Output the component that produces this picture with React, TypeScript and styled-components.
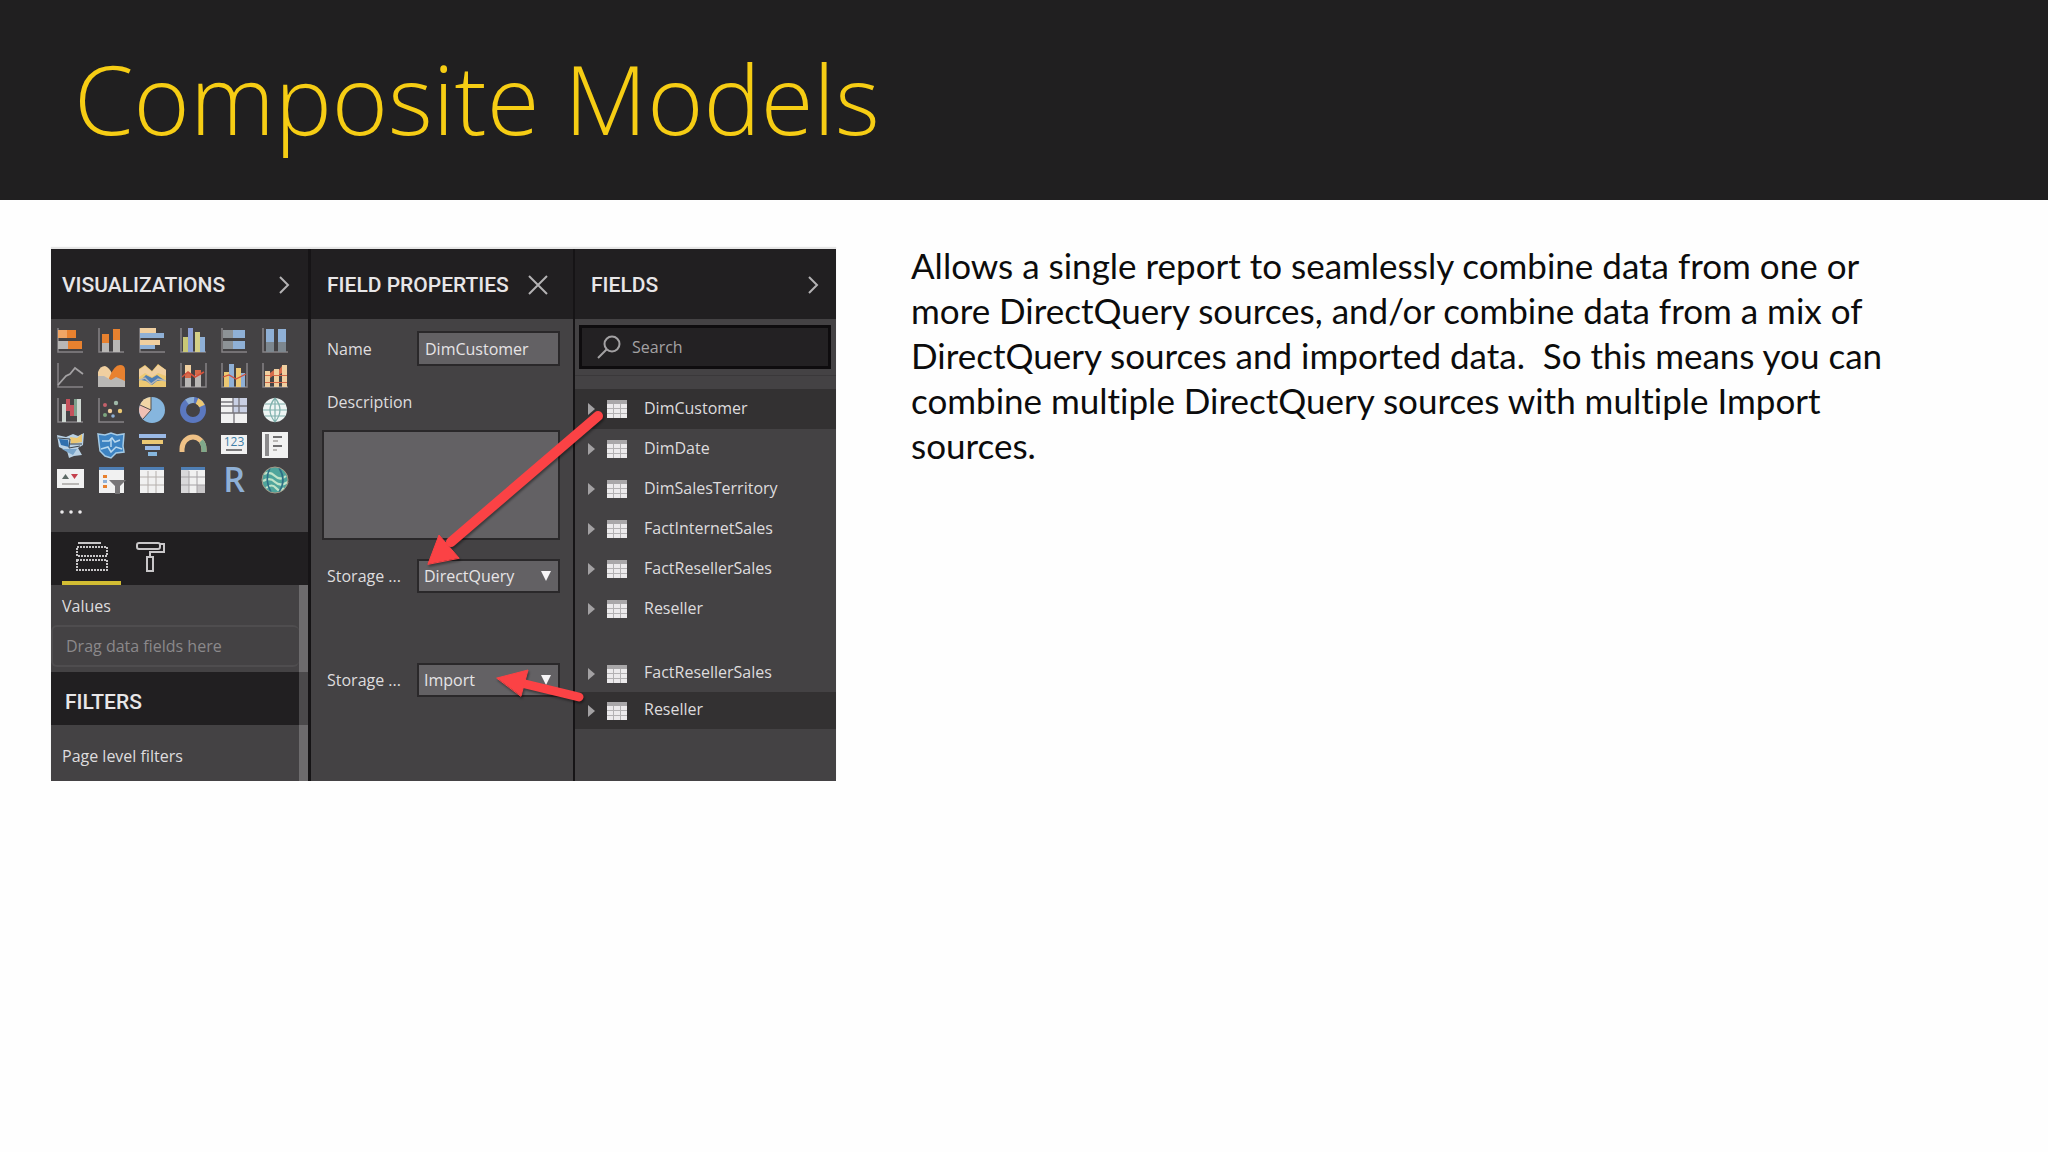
import React from "react";
import styled, { createGlobalStyle } from "styled-components";

const color = {
  title: "#f6cd14",
  banner: "#201f20",
  pane: "#444244",
  paneDark: "#211f21",
  line: "#161416",
  control: "#636164",
  controlEdge: "#2a282a",
  selected: "#333132",
  text: "#dedcde",
  muted: "#8b898b",
  arrow: "#fb4245",
};

const GlobalStyle = createGlobalStyle`
  *, *::before, *::after { box-sizing: border-box; }
  body {
    margin: 0;
    background: #fefefe;
    font-family: "Open Sans", "Noto Sans", sans-serif;
  }
  h1, h2, p, ul { margin: 0; padding: 0; }
  button { padding: 0; border: 0; background: none; color: inherit; cursor: pointer; }
`;

const Banner = styled.header`
  padding: 34px 74px 38px;
  background: ${color.banner};
`;

const Title = styled.h1`
  color: ${color.title};
  font-size: 96px;
  font-weight: 300;
  line-height: 128px;
`;

const Content = styled.main`
  display: flex;
  align-items: flex-start;
  gap: 75px;
  padding: 43px 51px;
`;

const Summary = styled.p`
  flex: 1;
  max-width: 1000px;
  color: #0c0c0c;
  font-family: Lato, "Open Sans", sans-serif;
  font-size: 35px;
  font-variant-ligatures: none;
  line-height: 45px;
  white-space: pre-wrap;
`;

const Panes = styled.section`
  position: relative;
  flex: none;
  display: grid;
  grid-template-columns: 257px 265px 263px;
  margin-top: 6px;
  background: ${color.pane};
  box-shadow: 0 -2px 1px #e6e6e6;
  color: ${color.text};
  font-size: 16px;
  font-weight: 500;
  line-height: 22px;
`;

const Pane = styled.div<{ $edge?: number }>`
  display: flex;
  flex-direction: column;
  border-left: ${(p) => p.$edge ?? 0}px solid ${color.line};
`;

const PaneHeader = styled.div<{ $left: number; $right: number }>`
  display: flex;
  align-items: center;
  justify-content: space-between;
  height: 70px;
  padding: 1px ${(p) => p.$right}px 0 ${(p) => p.$left}px;
  background: ${color.paneDark};
`;

const PaneTitle = styled.h2`
  color: #e8e6e8;
  font-family: Roboto, sans-serif;
  font-size: 21px;
  font-weight: 500;
  line-height: 24px;
  white-space: nowrap;
`;

const IconButton = styled.button`
  display: flex;
  color: #b4b2b4;
`;

const Gallery = styled.div`
  display: grid;
  grid-template-columns: repeat(6, 41px);
  grid-auto-rows: 35px;
  height: 213px;
  padding-top: 3px;
`;

const GalleryButton = styled.button`
  display: grid;
  justify-items: start;
  align-items: center;
  padding-left: 5px;

  > svg { overflow: visible; }
`;

const Tabs = styled.div`
  display: flex;
  height: 53px;
  padding-left: 11px;
  background: ${color.paneDark};
`;

const Tab = styled.button<{ $active?: boolean }>`
  display: grid;
  place-items: center;
  width: 59px;
  border-bottom: 4px solid ${(p) => (p.$active ? "#d3bd33" : "transparent")};
`;

const Scroller = styled.div`
  display: flex;
  flex: 1;
`;

const ScrollBody = styled.div`
  flex: 1;
`;

const Track = styled.div`
  width: 9px;
  padding-top: 87px;
  background: #6d6b6d;
`;

const Thumb = styled.div`
  height: 53px;
  background: #4b494b;
`;

const Well = styled.div`
  display: flex;
  flex-direction: column;
  gap: 8px;
  height: 87px;
  padding-top: 10px;
`;

const WellLabel = styled.div`
  padding-left: 11px;
`;

const DropZone = styled.div`
  display: flex;
  align-items: center;
  height: 42px;
  padding-left: 13px;
  border: 2px solid #4f4d4f;
  border-right: 0;
  border-radius: 6px;
  color: ${color.muted};
`;

const SectionBar = styled.div`
  display: flex;
  align-items: center;
  height: 53px;
  padding: 7px 0 0 14px;
  background: ${color.paneDark};
`;

const FilterLabel = styled.div`
  padding: 20px 11px 14px;
`;

const Form = styled.form`
  display: flex;
  flex-direction: column;
  padding: 12px 13px 0 11px;
`;

const Field = styled.div<{ $gap?: number }>`
  display: flex;
  align-items: center;
  justify-content: space-between;
  margin-top: ${(p) => p.$gap ?? 0}px;
  padding-left: 5px;
`;

const Label = styled.label`
  white-space: nowrap;
`;

const DescriptionLabel = styled(Label)`
  margin: 25px 5px 17px;
`;

const control = `
  border: 2px solid ${color.controlEdge};
  border-radius: 0;
  outline: 0;
  background: ${color.control};
  color: #e6e4e6;
  font: inherit;
`;

const TextBox = styled.input`
  ${control}
  width: 143px;
  height: 35px;
  padding: 0 6px;
`;

const TextArea = styled.textarea`
  ${control}
  height: 110px;
  padding: 8px;
  resize: none;
`;

const SelectBox = styled.div`
  display: grid;
  align-items: center;
  width: 143px;

  > * { grid-area: 1 / 1; }
  > svg { justify-self: end; margin-right: 9px; pointer-events: none; }
`;

const Select = styled.select`
  ${control}
  width: 100%;
  height: 34px;
  padding: 0 5px;
  appearance: none;
`;

const SearchRow = styled.div`
  height: 57px;
  padding: 6px 5px 0 4px;
  border-bottom: 1px solid #3a383a;
`;

const SearchBox = styled.label`
  display: flex;
  align-items: center;
  gap: 11px;
  height: 44px;
  padding-left: 15px;
  border: 3px solid #0e0c0e;
  background: #232123;
  color: #a3a1a3;
`;

const SearchInput = styled.input`
  min-width: 0;
  flex: 1;
  padding: 0;
  border: 0;
  outline: 0;
  background: none;
  color: inherit;
  font: inherit;
  &::placeholder { color: inherit; opacity: 1; }
`;

const TableList = styled.ul<{ $gap: number }>`
  margin-top: ${(p) => p.$gap}px;
  list-style: none;
`;

const TableButton = styled.button<{ $selected: boolean; $height: number }>`
  display: flex;
  align-items: center;
  width: 100%;
  height: ${(p) => p.$height}px;
  padding-left: 13px;
  background: ${(p) => (p.$selected ? color.selected : "none")};
  font: inherit;
`;

const TableName = styled.span`
  padding: 0 0 3px 17px;
`;

const TableGlyph = styled.svg`
  margin-left: 12px;
`;

const Callouts = styled.svg`
  position: absolute;
  inset: 0;
  width: 100%;
  height: 100%;
  pointer-events: none;
  filter: drop-shadow(1px 2px 1px rgba(0, 0, 0, 0.4));
`;

const ORANGE = "#e8812f";
const CREAM = "#f0cfa0";
const YELLOW = "#ecc873";
const GRAY = "#b9b7b5";
const BLUE = "#8fb0d6";
const STEEL = "#4f7fb5";
const RED = "#d66a4a";
const WHITE = "#f1f1f1";
const AXIS = "#858385";

const Bar = ({ x, y, w, h, c }: { x: number; y: number; w: number; h: number; c: string }) => (
  <rect x={x} y={y} width={w} height={h} fill={c} />
);
const Axes = ({ both = false }: { both?: boolean }) => (
  <path d={both ? "M2 2V26H27V2" : "M2 2V26H27"} fill="none" stroke={AXIS} strokeWidth="1.5" />
);

const visuals: { name: string; art: React.ReactNode }[] = [
  { name: "Stacked bar chart", art: <><Axes /><Bar x={2} y={4} w={9} h={8} c="#f0a565" /><Bar x={11} y={4} w={9} h={8} c={ORANGE} /><Bar x={2} y={15} w={10} h={8} c={GRAY} /><Bar x={12} y={15} w={14} h={8} c={ORANGE} /></> },
  { name: "Stacked column chart", art: <><Axes /><Bar x={5} y={8} w={7} h={9} c={ORANGE} /><Bar x={5} y={17} w={7} h={9} c={GRAY} /><Bar x={16} y={3} w={7} h={11} c={ORANGE} /><Bar x={16} y={14} w={7} h={12} c={GRAY} /></> },
  { name: "Clustered bar chart", art: <><Axes /><Bar x={2} y={2} w={16} h={5} c={CREAM} /><Bar x={2} y={7} w={24} h={5} c={BLUE} /><Bar x={2} y={14} w={20} h={5} c={CREAM} /><Bar x={2} y={19} w={15} h={4} c={BLUE} /></> },
  { name: "Clustered column chart", art: <><Axes /><Bar x={4} y={11} w={5} h={15} c="#c9c876" /><Bar x={9} y={2} w={5} h={24} c="#8c9fd4" /><Bar x={16} y={6} w={5} h={20} c="#d5cf86" /><Bar x={21} y={11} w={5} h={15} c={BLUE} /></> },
  { name: "100% stacked bar chart", art: <><Axes /><Bar x={3} y={4} w={10} h={8} c="#8d9296" /><Bar x={13} y={4} w={12} h={8} c={BLUE} /><Bar x={3} y={15} w={10} h={8} c="#8d9296" /><Bar x={13} y={15} w={12} h={8} c={BLUE} /></> },
  { name: "100% stacked column chart", art: <><Axes /><Bar x={5} y={3} w={8} h={13} c={BLUE} /><Bar x={5} y={16} w={8} h={10} c="#7d878f" /><Bar x={17} y={3} w={8} h={13} c={BLUE} /><Bar x={17} y={16} w={8} h={10} c="#7d878f" /></> },
  { name: "Line chart", art: <><Axes /><path d="M2 24 10 15 14 13 19 7 27 13" fill="none" stroke="#a3a1a3" strokeWidth="1.8" /></> },
  { name: "Area chart", art: <><path d="M1 26V11Q3 5 8 5Q12 6 16 14V26Z" fill={CREAM} /><path d="M12 17Q17 4 23 4Q28 4 28 9V26H12Z" fill={ORANGE} /><path d="M1 26V15L7 15 14 19 19 16 28 20V26Z" fill={GRAY} /></> },
  { name: "Stacked area chart", art: <><path d="M1 26V8L7 4 14 10 20 3 28 9V26Z" fill={YELLOW} /><path d="M1 9 7 5 14 11 20 4 28 9V15L20 12 14 16 7 12 1 16Z" fill={CREAM} /><path d="M3 19 8 14 14 17 19 14 26 19 19 20 14 24 8 20Z" fill={STEEL} /><path d="M1 19 7 17 13 23 20 18 28 20" fill="none" stroke={GRAY} strokeWidth="1.5" /></> },
  { name: "Line and stacked column chart", art: <><Axes both /><Bar x={6} y={4} w={6} h={8} c={CREAM} /><Bar x={6} y={12} w={6} h={5} c={RED} /><Bar x={6} y={17} w={6} h={9} c={GRAY} /><Bar x={16} y={9} w={6} h={5} c={RED} /><Bar x={16} y={14} w={6} h={12} c={GRAY} /><path d="M3 16 9 11 16 16 25 11" fill="none" stroke="#d4503b" strokeWidth="1.6" /></> },
  { name: "Line and clustered column chart", art: <><Axes both /><Bar x={4} y={11} w={5} h={15} c={YELLOW} /><Bar x={9} y={3} w={5} h={23} c={BLUE} /><Bar x={16} y={7} w={5} h={19} c={YELLOW} /><Bar x={21} y={12} w={4} h={14} c={BLUE} /><path d="M3 16 9 14 16 18 26 13" fill="none" stroke="#d4503b" strokeWidth="1.2" /></> },
  { name: "Ribbon chart", art: <><Axes /><path d="M4 12H9L13 9H18L21 5H26V12H21L18 14H13L9 17H4Z" fill={RED} /><Bar x={4} y={10} w={5} h={16} c={CREAM} /><Bar x={13} y={8} w={5} h={18} c={CREAM} /><Bar x={21} y={4} w={5} h={22} c={CREAM} /><Bar x={4} y={21} w={22} h={1} c={RED} /><Bar x={4} y={14} w={22} h={1} c={RED} /></> },
  { name: "Waterfall chart", art: <><Axes /><Bar x={6} y={8} w={4} h={18} c="#cfd8d2" /><Bar x={10} y={3} w={4} h={12} c="#c4525c" /><Bar x={14} y={9} w={4} h={11} c="#c4525c" /><Bar x={18} y={3} w={3} h={17} c="#7fa08d" /><Bar x={21} y={3} w={4} h={23} c="#cfd8d2" /></> },
  { name: "Scatter chart", art: <><Axes /><circle cx="8" cy="9" r="2" fill="#c4606a" /><circle cx="13" cy="15" r="2.2" fill={CREAM} /><circle cx="19" cy="7" r="2.2" fill="#9fb8a8" /><circle cx="8" cy="19" r="2" fill="#7da67f" /><circle cx="16" cy="20" r="1.8" fill={BLUE} /><circle cx="23" cy="15" r="2.2" fill={YELLOW} /></> },
  { name: "Pie chart", art: <><circle cx="14" cy="14" r="13" fill="#86b6de" /><path d="M13 14V1A13 13 0 0 0 2 9Z" fill="#f0d6a6" /><path d="M13 14 2 9A13 13 0 0 0 5 23Z" fill="#efc0b4" /><path d="M13 1V14L5 23M13 14 2 9" stroke="#55504f" fill="none" /></> },
  { name: "Donut chart", art: <><circle cx="14" cy="14" r="10" fill="none" stroke="#5b78c0" strokeWidth="6" /><path d="M18 5A10 10 0 0 1 23 10" fill="none" stroke={YELLOW} strokeWidth="6" /><path d="M8 6A10 10 0 0 1 15 4" fill="none" stroke={BLUE} strokeWidth="6" /></> },
  { name: "Treemap", art: <><Bar x={1} y={2} w={26} h={25} c={WHITE} /><Bar x={13} y={2} w={14} h={15} c="#c9d0e4" /><path d="M1 10H19M1 17H27M13 2V17M19 2V17M14 17V27M19 10H27M1 6H13" stroke="#77757b" strokeWidth="1.3" /></> },
  { name: "Map", art: <><circle cx="14" cy="14" r="12" fill="#eef5f4" /><path d="M2 14H26M4 8H24M4 20H24M14 2V26M14 2Q4 14 14 26M14 2Q24 14 14 26" stroke="#7fb0ac" fill="none" strokeWidth="1.2" /></> },
  { name: "Filled map", art: <><path d="M1 4 10 6 17 3 22 5 28 2 27 14 22 17 26 24 18 25 13 27 11 20 3 16Z" fill="#b9d1e4" /><path d="M3 8 12 9 13 16 5 14Z" fill="#2f6fae" /><path d="M14 6 21 7 26 3V11L15 13Z" fill={YELLOW} /><path d="M6 18H21L17 24 11 21Z" fill="#79a5cb" /><path d="M2 7 14 8 13 17 24 15M14 13H26" fill="none" stroke="#3f474f" /></> },
  { name: "Shape map", art: <><path d="M1 3 8 4 14 2 20 4 27 3 26 15 27 21 19 22 14 27 8 25 3 20 2 12Z" fill="#3d83c2" stroke="#a5cbe6" strokeWidth="1.5" /><path d="M5 10H12L15 7 18 11 23 9M4 18 11 16 14 21 19 16 25 18M14 7V16" fill="none" stroke="#b8d8ee" strokeWidth="1.5" /></> },
  { name: "Funnel chart", art: <><Bar x={1} y={3} w={27} h={4} c="#9ab9e6" /><Bar x={4} y={9} w={21} h={4} c={YELLOW} /><Bar x={7} y={15} w={15} h={4} c="#9ab9e6" /><Bar x={10} y={21} w={9} h={4} c="#86b6de" /></> },
  { name: "Gauge", art: <><path d="M3 21V18A11 12 0 0 1 25 18V21" fill="none" stroke="#efc186" strokeWidth="5" /><path d="M22 10Q25 13 25 18V21" fill="none" stroke="#7fa88b" strokeWidth="5" /></> },
  { name: "Card", art: <><Bar x={1} y={4} w={26} h={19} c={WHITE} /><text x="14" y="15" textAnchor="middle" fontFamily="Open Sans" fontSize="12" fill="#3f7fa8">123</text><Bar x={6} y={18} w={16} h={2} c="#7b7a7c" /></> },
  { name: "Multi-row card", art: <><Bar x={1} y={1} w={26} h={26} c={WHITE} /><Bar x={4} y={3} w={4} h={22} c="#8b8a8c" /><Bar x={12} y={5} w={9} h={2} c="#6f6e70" /><Bar x={12} y={9} w={5} h={2} c={GRAY} /><Bar x={12} y={14} w={9} h={2} c="#6f6e70" /><Bar x={12} y={18} w={4} h={2} c={GRAY} /></> },
  { name: "KPI", art: <><Bar x={1} y={3} w={27} h={19} c={WHITE} /><path d="M6 13 9.500 8 13 13Z" fill="#5d6a66" /><path d="M15 8H22L18.500 13Z" fill="#c4404c" /><Bar x={6} y={17} w={17} h={2} c={GRAY} /></> },
  { name: "Slicer", art: <><Bar x={2} y={1} w={25} h={26} c={WHITE} /><Bar x={2} y={1} w={25} h={3} c={STEEL} /><Bar x={6} y={9} w={4} h={3} c={ORANGE} /><Bar x={6} y={14} w={4} h={3} c={BLUE} /><Bar x={6} y={19} w={4} h={3} c={ORANGE} /><path d="M12 14H29L23 20V28H18V20Z" fill="#777577" /></> },
  { name: "Table", art: <><Bar x={2} y={1} w={24} h={26} c={WHITE} /><Bar x={2} y={1} w={24} h={3} c={STEEL} /><path d="M2 11H26M2 19H26M10 5V27M18 5V27" stroke="#b5b0ad" /></> },
  { name: "Matrix", art: <><Bar x={2} y={1} w={24} h={26} c={WHITE} /><Bar x={2} y={1} w={24} h={3} c={STEEL} /><Bar x={2} y={4} w={8} h={23} c="#d9d8da" /><Bar x={18} y={19} w={8} h={8} c="#c9c7c9" /><path d="M2 11H26M2 19H26M10 5V27M18 5V27" stroke="#a5a2a5" /></> },
  { name: "R script visual", art: <text x="14" y="26" textAnchor="middle" fontFamily="Open Sans" fontWeight="600" fontSize="34" fill="#8fb0d6">R</text> },
  { name: "ArcGIS map", art: <><circle cx="14" cy="14" r="13" fill="#4fa59c" /><path d="M3 8Q9 5 14 10T25 10M2 15Q9 11 14 16T27 16M5 22Q11 17 15 22T23 22" stroke="#bfe3c9" fill="none" strokeWidth="2.2" /><path d="M9 2Q3 14 10 26M18 2Q26 14 18 26" stroke="#2f6f86" fill="none" strokeWidth="1.6" /><circle cx="14" cy="14" r="13" fill="none" stroke="#a59a88" /></> },
];

const Chevron = () => (
  <svg width="12" height="18" viewBox="0 0 12 18" fill="none" stroke="currentColor" strokeWidth="2">
    <path d="M2 1 10 9 2 17" />
  </svg>
);

const Close = () => (
  <svg width="20" height="20" viewBox="0 0 20 20" fill="none" stroke="currentColor" strokeWidth="2">
    <path d="M1 1 19 19M19 1 1 19" />
  </svg>
);

const Magnifier = () => (
  <svg width="24" height="24" viewBox="0 0 24 24" fill="none" stroke="currentColor" strokeWidth="2">
    <circle cx="15" cy="9" r="7.500" />
    <path d="M10 14 1 23" />
  </svg>
);

const Expander = () => (
  <svg width="7" height="12" viewBox="0 0 7 12" fill="#a3a1a3">
    <path d="M0 0 7 6 0 12Z" />
  </svg>
);

const TableIcon = () => (
  <TableGlyph width="20" height="18" viewBox="0 0 20 18">
    <rect width="20" height="18" fill="#eceaec" />
    <rect width="20" height="4" fill="#a9a7a9" />
    <path d="M0 8.500H20M0 13.500H20M6.500 4V18M13.500 4V18" stroke="#b3b1b3" />
  </TableGlyph>
);

const DownArrow = () => (
  <svg width="10" height="10" viewBox="0 0 10 10" fill="#f7f5f7">
    <path d="M0 0H10L5 10Z" />
  </svg>
);

const FieldsIcon = () => (
  <svg width="32" height="31" viewBox="0 0 32 31" fill="none" stroke="#c9c7c9" strokeWidth="2">
    <path d="M2 2H25" />
    <path d="M1 6H31V15H1ZM1 19H31V29H1Z" strokeDasharray="2 1" />
  </svg>
);

const RollerIcon = () => (
  <svg width="30" height="31" viewBox="0 0 30 31" fill="none" stroke="#c9c7c9" strokeWidth="2">
    <rect x="1" y="2" width="23" height="6" rx="2" />
    <path d="M24 3H28V11H14V16M11 16H17V30H11Z" />
  </svg>
);

const MoreIcon = () => (
  <svg width="28" height="28" viewBox="0 0 28 28" fill="#eceaec">
    <circle cx="6" cy="11" r="1.800" />
    <circle cx="15" cy="11" r="1.800" />
    <circle cx="24" cy="11" r="1.800" />
  </svg>
);

const modelTables = ["DimCustomer", "DimDate", "DimSalesTerritory", "FactInternetSales", "FactResellerSales", "Reseller"];
const importTables = ["FactResellerSales", "Reseller"];

function Tables({ names, selected, gap, rowHeight }: { names: string[]; selected: string; gap: number; rowHeight: number }) {
  return (
    <TableList $gap={gap}>
      {names.map((name) => (
        <li key={name}>
          <TableButton type="button" $selected={name === selected} $height={rowHeight}>
            <Expander />
            <TableIcon />
            <TableName>{name}</TableName>
          </TableButton>
        </li>
      ))}
    </TableList>
  );
}

function StorageField({ id, value, gap }: { id: string; value: string; gap: number }) {
  return (
    <Field $gap={gap}>
      <Label htmlFor={id}>Storage ...</Label>
      <SelectBox>
        <Select id={id} defaultValue={value}>
          <option>DirectQuery</option>
          <option>Import</option>
        </Select>
        <DownArrow />
      </SelectBox>
    </Field>
  );
}

export default function App() {
  return (
    <>
      <GlobalStyle />
      <Banner>
        <Title>Composite Models</Title>
      </Banner>
      <Content>
        <Panes>
          <Pane>
            <PaneHeader $left={11} $right={18}>
              <PaneTitle>VISUALIZATIONS</PaneTitle>
              <IconButton type="button" aria-label="Collapse visualizations"><Chevron /></IconButton>
            </PaneHeader>
            <Gallery>
              {visuals.map(({ name, art }) => (
                <GalleryButton key={name} type="button" aria-label={name}>
                  <svg width="28" height="28" viewBox="0 0 28 28">{art}</svg>
                </GalleryButton>
              ))}
              <GalleryButton type="button" aria-label="More visuals"><MoreIcon /></GalleryButton>
            </Gallery>
            <Tabs>
              <Tab type="button" aria-label="Fields" $active><FieldsIcon /></Tab>
              <Tab type="button" aria-label="Format"><RollerIcon /></Tab>
            </Tabs>
            <Scroller>
              <ScrollBody>
                <Well>
                  <WellLabel>Values</WellLabel>
                  <DropZone>Drag data fields here</DropZone>
                </Well>
                <SectionBar><PaneTitle>FILTERS</PaneTitle></SectionBar>
                <FilterLabel>Page level filters</FilterLabel>
              </ScrollBody>
              <Track><Thumb /></Track>
            </Scroller>
          </Pane>

          <Pane $edge={3}>
            <PaneHeader $left={16} $right={25}>
              <PaneTitle>FIELD PROPERTIES</PaneTitle>
              <IconButton type="button" aria-label="Close field properties"><Close /></IconButton>
            </PaneHeader>
            <Form>
              <Field>
                <Label htmlFor="name">Name</Label>
                <TextBox id="name" defaultValue="DimCustomer" />
              </Field>
              <DescriptionLabel htmlFor="description">Description</DescriptionLabel>
              <TextArea id="description" />
              <StorageField id="storage-direct" value="DirectQuery" gap={19} />
              <StorageField id="storage-import" value="Import" gap={70} />
            </Form>
          </Pane>

          <Pane $edge={2}>
            <PaneHeader $left={16} $right={17}>
              <PaneTitle>FIELDS</PaneTitle>
              <IconButton type="button" aria-label="Collapse fields"><Chevron /></IconButton>
            </PaneHeader>
            <SearchRow>
              <SearchBox>
                <Magnifier />
                <SearchInput placeholder="Search" aria-label="Search" />
              </SearchBox>
            </SearchRow>
            <Tables names={modelTables} selected="DimCustomer" gap={13} rowHeight={40} />
            <Tables names={importTables} selected="Reseller" gap={26} rowHeight={37} />
          </Pane>

          <Callouts viewBox="0 0 785 532" aria-hidden="true">
            <g stroke={color.arrow} fill={color.arrow} strokeLinecap="round">
              <path d="M547 167 400 293" strokeWidth="10" />
              <path d="M377 315 388 286 408 309Z" strokeWidth="1" />
              <path d="M528 448 470 434" strokeWidth="9" />
              <path d="M446 429 477 421 470 447Z" strokeWidth="1" />
            </g>
          </Callouts>
        </Panes>
        <Summary>
          {"Allows a single report to seamlessly combine data from one or more DirectQuery sources, and/or combine data from a mix of DirectQuery sources and imported data.  So this means you can combine multiple DirectQuery sources with multiple Import sources."}
        </Summary>
      </Content>
    </>
  );
}
